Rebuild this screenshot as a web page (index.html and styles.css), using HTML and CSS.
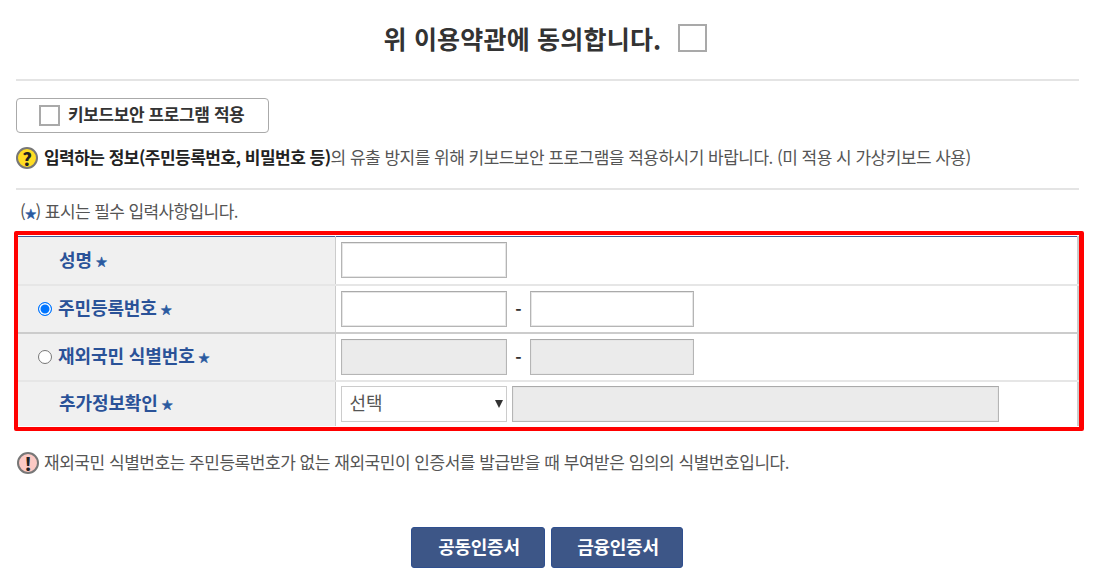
FILE: index.html
```html
<!DOCTYPE html>
<html lang="ko">
<head>
  <meta charset="UTF-8" />
  <title>본인확인</title>
  <link rel="stylesheet" href="styles.css">
</head>
<body>
  <div class="page">
    <div class="agree">
      <span class="agree-text">위 이용약관에 동의합니다.</span>
      <span class="box box-big"></span>
    </div>
    <hr class="rule">

    <div class="kbd-btn">
      <span class="box box-small"></span>
      <span class="kbd-text">키보드보안 프로그램 적용</span>
    </div>
    <p class="notice">
      <span class="ico ico-q">?</span>
      <span class="notice-text"><b>입력하는 정보(주민등록번호, 비밀번호 등)</b>의 유출 방지를 위해 키보드보안 프로그램을 적용하시기 바랍니다. (미 적용 시 가상키보드 사용)</span>
    </p>
    <hr class="rule">

    <p class="req">(<span class="star">★</span>) 표시는 필수 입력사항입니다.</p>

    <div class="redbox">
      <table class="form">
        <tr>
          <th><div class="lbl">성명 <span class="star">★</span></div></th>
          <td><div class="fields"><input class="inp" type="text"></div></td>
        </tr>
        <tr class="row-b">
          <th><div class="lbl lbl-radio"><span class="radio on"></span><span>주민등록번호 <span class="star">★</span></span></div></th>
          <td><div class="fields"><input class="inp" type="text"><span class="dash">-</span><input class="inp inp-2" type="text"></div></td>
        </tr>
        <tr>
          <th><div class="lbl lbl-radio"><span class="radio"></span><span>재외국민 식별번호 <span class="star">★</span></span></div></th>
          <td><div class="fields"><input class="inp off" type="text" disabled><span class="dash">-</span><input class="inp inp-2 off" type="text" disabled></div></td>
        </tr>
        <tr>
          <th><div class="lbl">추가정보확인 <span class="star">★</span></div></th>
          <td>
            <div class="fields">
              <div class="sel"><select><option>선택</option></select></div>
              <input class="inp inp-wide off" type="text" disabled>
            </div>
          </td>
        </tr>
      </table>
    </div>

    <p class="notice notice-2">
      <span class="ico ico-x">!</span>
      <span class="notice-text">재외국민 식별번호는 주민등록번호가 없는 재외국민이 인증서를 발급받을 때 부여받은 임의의 식별번호입니다.</span>
    </p>

    <div class="actions">
      <button class="btn btn-a">공동인증서</button>
      <button class="btn btn-b">금융인증서</button>
    </div>
  </div>
</body>
</html>
```

FILE: styles.css
```css
* {
  box-sizing: border-box;
}

body {
  margin: 0;
  background: #fff;
  color: #555;
  font-family: "Noto Sans CJK KR", "Noto Sans", sans-serif;
  font-size: 17px;
  overflow: hidden;
}

.page {
  width: 1098px;
  height: 577px;
  padding: 0 14px;
  overflow: hidden;
}

.agree {
  height: 79px;
  padding: 24px 7px 0 0;
  display: flex;
  justify-content: center;
  align-items: flex-start;
  gap: 17px;
}

.agree-text {
  margin-top: -3px;
  font-size: 25px;
  line-height: 34px;
  font-weight: 700;
  color: #333;
  letter-spacing: 0.2px;
}

.box {
  display: block;
  flex: none;
  background: #fff;
  border: 2px solid #a9a9a9;
}

.box-big {
  width: 29px;
  height: 28px;
}

.box-small {
  width: 21px;
  height: 21px;
}

.rule {
  height: 2px;
  margin: 0 5px 0 2px;
  border: 0;
  background: #e4e4e4;
}

.kbd-btn {
  width: 253px;
  height: 35px;
  margin: 17px 0 0 2px;
  padding-left: 22px;
  display: flex;
  align-items: center;
  gap: 8px;
  border: 1px solid #aaa;
  border-radius: 4px;
  font-size: 17px;
  font-weight: 700;
  color: #333;
  letter-spacing: -0.4px;
}

.kbd-text {
  margin-top: -4px;
}

.notice {
  margin: 13px 0 0 2px;
  height: 24px;
  display: flex;
  align-items: center;
  gap: 6px;
  line-height: 24px;
  letter-spacing: -0.52px;
  white-space: nowrap;
}

.notice-text {
  margin-top: -2px;
}

.notice b {
  color: #222;
}

.ico {
  flex: none;
  width: 22px;
  height: 22px;
  border: 2px solid #777;
  border-radius: 50%;
  display: flex;
  align-items: center;
  justify-content: center;
  font-size: 18px;
  line-height: 18px;
  font-weight: 900;
  color: #222;
  letter-spacing: 0;
}

.ico-q {
  background: #ffdd22;
}

.ico-x {
  background: #fcc9c4;
}

.page > .rule:nth-of-type(2) {
  margin-top: 18px;
}

.req {
  margin: 9px 0 0 6px;
  height: 27px;
  line-height: 24px;
  letter-spacing: -0.6px;
}

.star {
  color: #2a5aa0;
  font-size: 11px;
  -webkit-text-stroke: 0.5px #2a5aa0;
}

.lbl .star {
  margin-left: -1px;
  vertical-align: 1px;
}

.redbox {
  margin-top: 5px;
  height: 200px;
  border: 4px solid #f00;
  border-radius: 2px;
  border-right-width: 5px;
}

.form {
  width: 100%;
  height: 190px;
  margin-top: 1px;
  border-collapse: collapse;
  table-layout: fixed;
  border-top: 1px solid #3d5a99;
  border-right: 2px solid #ccc;
}

.form tr {
  height: 48px;
  border-bottom: 2px solid #e6e6e6;
}

.form tr:last-child {
  height: 45px;
  border-bottom: 0;
}

.form .row-b {
  border-bottom-color: #ccc;
}

.form th {
  width: 317px;
  padding: 0 0 3px;
  background: #f0f0f0;
  border-right: 1px solid #ccc;
  text-align: left;
  font-weight: 700;
}

.form td {
  padding: 0 0 0 5px;
}

.lbl {
  padding-left: 41px;
  color: #2a5298;
  font-size: 18px;
  letter-spacing: -0.1px;
}

.lbl-radio {
  padding-left: 20px;
  display: flex;
  align-items: center;
  gap: 6px;
}

.radio {
  flex: none;
  width: 14px;
  height: 14px;
  margin-top: 3px;
  border: 1px solid #767676;
  border-radius: 50%;
  background: #fff;
}

.radio.on {
  border: 1.5px solid #0075ff;
  box-shadow: inset 0 0 0 1.5px #fff;
  background: #0075ff;
}

.fields {
  display: flex;
  align-items: center;
}

.inp {
  width: 166px;
  height: 36px;
  margin: 0;
  padding: 0 6px;
  border: 1px solid #b5b5b5;
  border-top-color: #aaa;
  box-shadow: inset 0 0 0 1px #e6e6e6;
  background: #fff;
}

.inp-2 {
  width: 164px;
}

.inp-wide {
  width: 487px;
  margin-left: 5px;
}

.off {
  background: #ebebeb;
}

.dash {
  width: 23px;
  padding-left: 1px;
  text-align: center;
  font-weight: 700;
  color: #333;
}

.sel {
  position: relative;
  width: 166px;
  height: 36px;
}

.sel select {
  width: 100%;
  height: 100%;
  padding: 0 8px 4px;
  border: 1px solid #ccc;
  border-radius: 0;
  background: #fff;
  color: #555;
  font-family: inherit;
  font-size: 18px;
  appearance: none;
}

.sel::after {
  content: "";
  position: absolute;
  right: 4px;
  top: 14px;
  border-top: 8px solid #333;
  border-left: 4px solid transparent;
  border-right: 4px solid transparent;
}

.notice-2 {
  margin: 20px 0 0 3px;
  gap: 5px;
  letter-spacing: -0.47px;
}

.actions {
  margin-top: 52px;
  display: flex;
  justify-content: center;
  gap: 6px;
  padding-right: 4px;
}

.btn {
  height: 41px;
  padding: 0 0 4px 2px;
  border: 1px solid #2f4f8f;
  border-radius: 3px;
  background: #3d5687;
  color: #fff;
  font-family: inherit;
  font-size: 18px;
  font-weight: 700;
  letter-spacing: -0.3px;
}

.btn-a {
  width: 134px;
}

.btn-b {
  width: 132px;
}
```
